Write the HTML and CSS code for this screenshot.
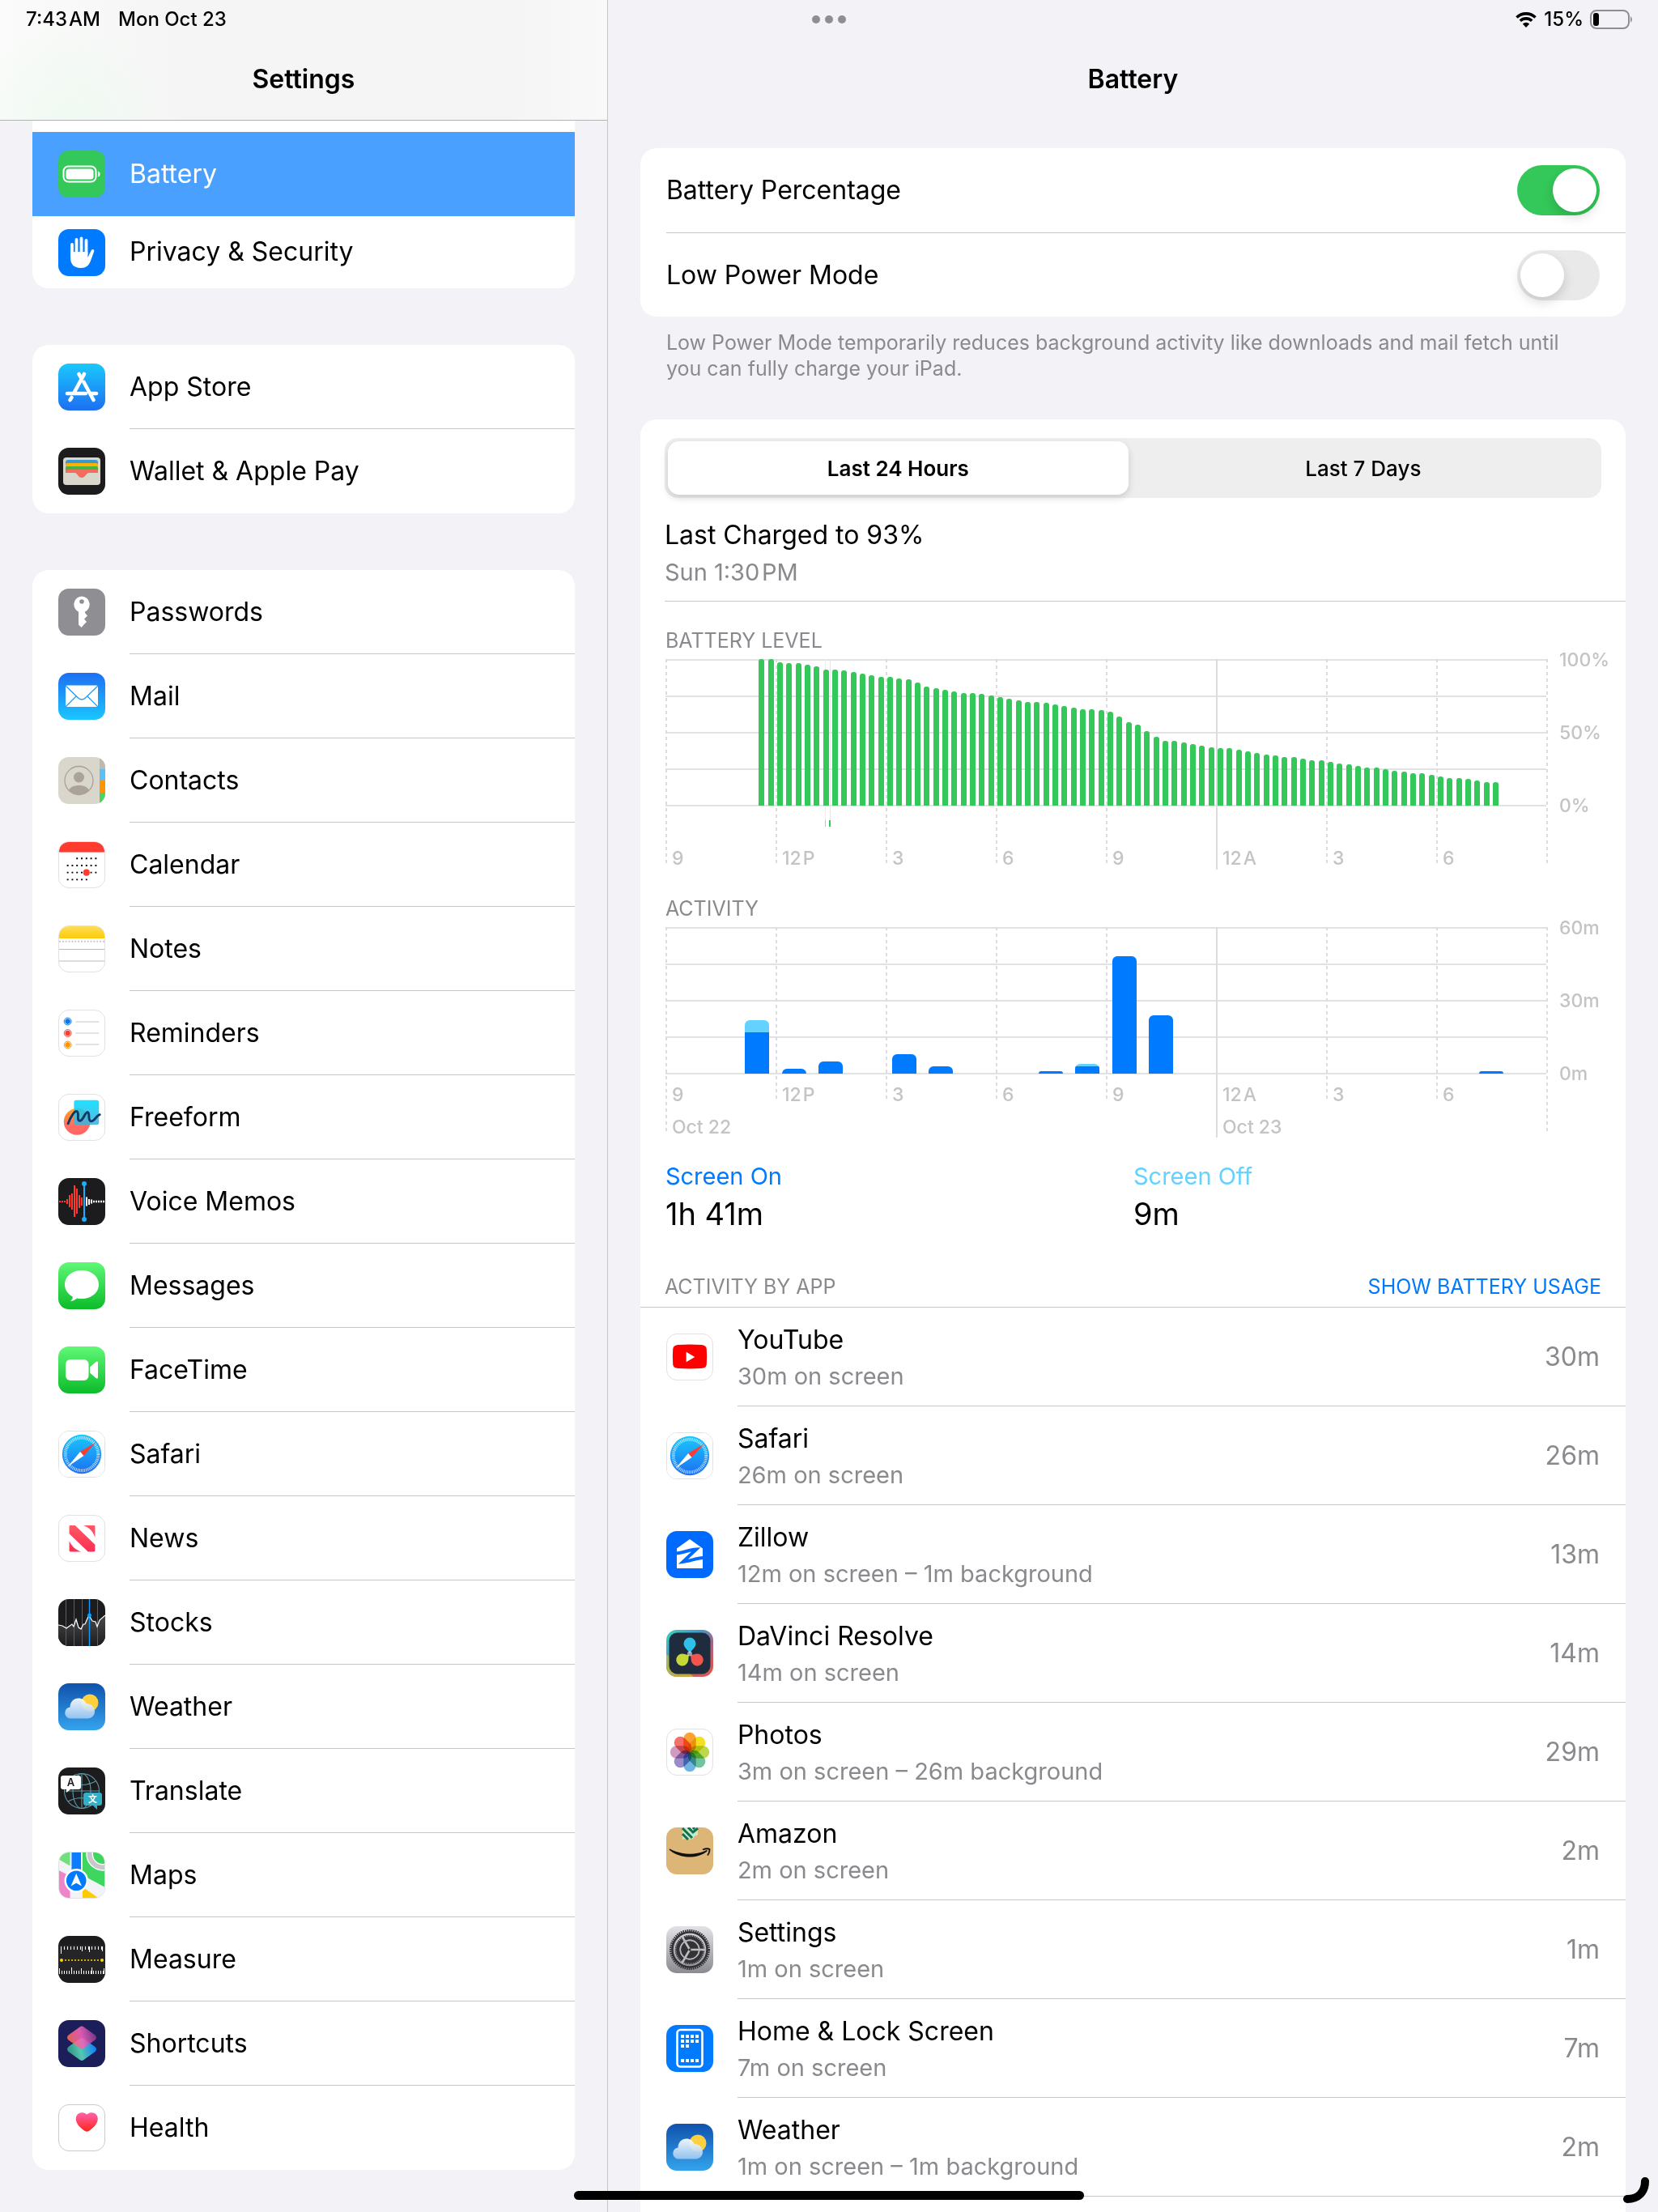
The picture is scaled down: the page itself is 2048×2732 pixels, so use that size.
FILE: index.html
```html
<!DOCTYPE html>
<html lang="en">
<head>
    <meta charset="UTF-8">
    <meta name="viewport" content="width=device-width, initial-scale=1.0">
    <title>Settings - Battery</title>
    <link rel="stylesheet" href="styles.css">
</head>
<body>
    <svg class="defs" width="0" height="0" aria-hidden="true">
        <defs>
            <linearGradient id="g-blue" x2="0" y2="1"><stop stop-color="#1ac8fc"/><stop offset="1" stop-color="#1d6ff2"/></linearGradient>
            <linearGradient id="g-mail" x2="0" y2="1"><stop stop-color="#1e6ff2"/><stop offset="1" stop-color="#1ac6ff"/></linearGradient>
            <linearGradient id="g-green" x2="0" y2="1"><stop stop-color="#60f877"/><stop offset="1" stop-color="#0bbc29"/></linearGradient>
            <linearGradient id="g-yellow" x2="0" y2="1"><stop stop-color="#fedd59"/><stop offset="1" stop-color="#fccb05"/></linearGradient>
            <linearGradient id="g-cyan" x2="0" y2="1"><stop stop-color="#00ddff"/><stop offset="1" stop-color="#43aede"/></linearGradient>
            <linearGradient id="g-coral" x2="0" y2="1"><stop stop-color="#ffa51f"/><stop offset=".6" stop-color="#ff6f61"/><stop offset="1" stop-color="#ff6464"/></linearGradient>
            <linearGradient id="g-news" x2="0" y2="1"><stop stop-color="#ff5964"/><stop offset="1" stop-color="#fb2f55"/></linearGradient>
            <linearGradient id="g-sky" x2="0" y2="1"><stop stop-color="#1052ad"/><stop offset="1" stop-color="#34a3ec"/></linearGradient>
            <linearGradient id="g-cloud" x2="0" y2="1"><stop stop-color="#fff"/><stop offset="1" stop-color="#9cc7f0"/></linearGradient>
            <linearGradient id="g-heart" x2="0" y2="1"><stop stop-color="#ff61ad"/><stop offset="1" stop-color="#ff2616"/></linearGradient>
            <linearGradient id="g-short1" x1="0" y1=".6" x2="1" y2=".4"><stop stop-color="#ff6a4d"/><stop offset=".5" stop-color="#f462bd"/><stop offset="1" stop-color="#7d3a8f"/></linearGradient>
            <linearGradient id="g-short2" x1="0" y1=".6" x2="1" y2=".4"><stop stop-color="#2f8f80"/><stop offset=".45" stop-color="#55c7b0"/><stop offset="1" stop-color="#0a7cff"/></linearGradient>
            <linearGradient id="g-gray" x2="0" y2="1"><stop stop-color="#e2e2e7"/><stop offset="1" stop-color="#8b8b92"/></linearGradient>
            <linearGradient id="g-resolve" x2="1" y2="1"><stop stop-color="#3fd3b4"/><stop offset=".35" stop-color="#3b9fd0"/><stop offset=".6" stop-color="#a0668c"/><stop offset="1" stop-color="#ee5340"/></linearGradient>
            <linearGradient id="g-stocks" x2="0" y2="1"><stop stop-color="#4a4a4c"/><stop offset="1" stop-color="#1c1c1e"/></linearGradient>
        </defs>
        <symbol id="icon-safari" viewBox="0 0 58 58">
            <rect width="58" height="58" fill="#fff"/>
            <circle cx="29" cy="29" r="25" fill="url(#g-blue)"/>
            <circle cx="29" cy="29" r="21" fill="none" stroke="#fff" stroke-opacity=".75" stroke-width="4" stroke-dasharray="1 1.2"/>
            <path d="M47 14 27 26l4.500 5z" fill="#ff3b30"/>
            <path d="M11 45 27 26l4.500 5z" fill="#fff"/>
        </symbol>
        <symbol id="icon-weather" viewBox="0 0 58 58">
            <rect width="58" height="58" fill="url(#g-sky)"/>
            <circle cx="39" cy="24" r="10.500" fill="#ffd03c"/>
            <path d="M16 43.500a7 7 0 0 1-1.500-14C14.500 23 19 18.500 25 18.500c4.500 0 8 2.500 9.500 6.500 6 0 10.500 4 10.500 9.500s-4 9-8.500 9z" fill="url(#g-cloud)" fill-opacity=".92"/>
        </symbol>
    </svg>

    <div class="screen">
        <nav class="sidebar" aria-label="Settings">
            <header class="sidebar-header">
                <div class="status"><span>7:43&#8202;AM</span><span>Mon Oct 23</span></div>
                <h1>Settings</h1>
            </header>

            <ul class="group group-cut">
                <li><a class="item selected" href="#battery">
                    <svg class="icon" viewBox="0 0 58 58"><rect width="58" height="58" fill="#34c759"/><rect x="6.500" y="19.500" width="40" height="19" rx="6" fill="none" stroke="#fff" stroke-width="2"/><rect x="9.500" y="22.500" width="34" height="13" rx="3.500" fill="#fff"/><path d="M49 25.500v7c3.500-1 3.500-6 0-7z" fill="#fff"/></svg>
                    <span>Battery</span></a></li>
                <li><a class="item item-short" href="#privacy">
                    <svg class="icon" viewBox="0 0 58 58"><rect width="58" height="58" fill="#007aff"/><path d="M17 33V19M22.500 31V13M28.500 31V11.500M34.500 31V14" stroke="#fff" stroke-width="3.800" stroke-linecap="round"/><path d="M15.100 28h21.300v7l4-8c1-3 4.500-2.500 3.800.5L40 39c-2 6-6 9-12 9-9 0-12.900-5-12.900-12z" fill="#fff"/></svg>
                    <span>Privacy &amp; Security</span></a></li>
            </ul>

            <ul class="group">
                <li><a class="item" href="#app-store">
                    <svg class="icon" viewBox="0 0 58 58"><rect width="58" height="58" fill="url(#g-blue)"/><path d="M32 13 19.500 36M25.500 13 29 19M31.500 23 43.500 45M11 37h23M41 37h6M16.500 42l-2 3" stroke="#fff" stroke-width="4.600" stroke-linecap="round" fill="none"/></svg>
                    <span>App Store</span></a></li>
                <li><a class="item" href="#wallet">
                    <svg class="icon" viewBox="0 0 58 58"><rect width="58" height="58" fill="#1c1c1e"/><rect x="6" y="12" width="46" height="34" rx="4" fill="#d9d6cc"/><path d="M9 18a3 3 0 0 1 3-3h34a3 3 0 0 1 3 3v5H9z" fill="#3b99d0"/><path d="M9 21a2 2 0 0 1 2-2h36a2 2 0 0 1 2 2v4H9z" fill="#ffb003"/><path d="M9 25a2 2 0 0 1 2-2h36a2 2 0 0 1 2 2v4H9z" fill="#46b43f"/><path d="M9 29a2 2 0 0 1 2-2h36a2 2 0 0 1 2 2v2H38c-4 0-4 6-9 6s-5-6-9-6H9z" fill="#f26d5f"/></svg>
                    <span>Wallet &amp; Apple Pay</span></a></li>
            </ul>

            <ul class="group">
                <li><a class="item" href="#passwords">
                    <svg class="icon" viewBox="0 0 58 58"><rect width="58" height="58" fill="#8e8e93"/><path d="M29 9.500a10 10 0 0 1 4 19v1.500l3 3.500-4 4 3 3.500-3 3-3.500 4-3.500-3.500v-16a10 10 0 0 1 4-19z" fill="#fff"/><circle cx="29" cy="16" r="2.800" fill="#8e8e93"/></svg>
                    <span>Passwords</span></a></li>
                <li><a class="item" href="#mail">
                    <svg class="icon" viewBox="0 0 58 58"><rect width="58" height="58" fill="url(#g-mail)"/><rect x="9" y="15.500" width="40" height="26.500" rx="1.500" fill="#fff"/><path d="M9 16 24 30.500q5 5 10 0L49 16M9 42l13-13M49 42 36 29" fill="none" stroke="#249bf7" stroke-width="1.300"/></svg>
                    <span>Mail</span></a></li>
                <li><a class="item" href="#contacts">
                    <svg class="icon" viewBox="0 0 58 58"><rect width="58" height="58" fill="#d9d6cc"/><path d="M51 0h7v15h-7z" fill="#bdb9b0"/><path d="M51 15h7v14h-7z" fill="#5ac0f6"/><path d="M51 29h7v15h-7z" fill="#ff9500"/><path d="M51 44h7v14h-7z" fill="#4cd163"/><circle cx="25.500" cy="29" r="17.500" fill="none" stroke="#a9a296" stroke-width="1.300"/><circle cx="25.500" cy="25" r="6.500" fill="#aaa29b"/><path d="M13 41c3-8 22-8 25 0-6 7-19 7-25 0z" fill="#aaa29b"/></svg>
                    <span>Contacts</span></a></li>
                <li><a class="item" href="#calendar">
                    <svg class="icon icon-light" viewBox="0 0 58 58"><rect width="58" height="13" fill="#ff3b30"/><path d="M22 21h26M10 30h38M10 39h38M10 48h26" stroke="#000" stroke-width="2" stroke-dasharray="2 4"/><circle cx="35" cy="39" r="4.200" fill="#ff3b30"/></svg>
                    <span>Calendar</span></a></li>
                <li><a class="item" href="#notes">
                    <svg class="icon icon-light" viewBox="0 0 58 58"><rect width="58" height="15.500" fill="url(#g-yellow)"/><path d="M0 19.500h58" stroke="#c9c9cc" stroke-width="2" stroke-dasharray="2 2"/><path d="M0 29.500h58M0 44.500h58" stroke="#bcbcc0" stroke-width="1.200"/></svg>
                    <span>Notes</span></a></li>
                <li><a class="item" href="#reminders">
                    <svg class="icon icon-light" viewBox="0 0 58 58"><g stroke="#fff" stroke-width="1"><circle cx="11" cy="14" r="4" fill="#007aff"/><circle cx="11" cy="29" r="4" fill="#ff3b30"/><circle cx="11" cy="44" r="4" fill="#ff9500"/></g><g fill="none"><circle cx="11" cy="14" r="4.600" stroke="#007aff"/><circle cx="11" cy="29" r="4.600" stroke="#ff3b30"/><circle cx="11" cy="44" r="4.600" stroke="#ff9500"/></g><path d="M21 14.500h30M21 29h30M21 43.500h30" stroke="#c7c7cc" stroke-width="1.200"/></svg>
                    <span>Reminders</span></a></li>
                <li><a class="item" href="#freeform">
                    <svg class="icon icon-light" viewBox="0 0 58 58"><circle cx="23" cy="34.500" r="17" fill="url(#g-coral)"/><rect x="19" y="7" width="32" height="31.500" rx="3" fill="url(#g-cyan)" fill-opacity=".88"/><path d="M11.500 37C15 28 20 20 23 21.500s-1 12 3.500 12S33 22 36.500 22.500 36 34 41 34s6-7 11-8.500" fill="none" stroke="#0d3a63" stroke-width="3" stroke-linecap="round"/></svg>
                    <span>Freeform</span></a></li>
                <li><a class="item" href="#voice-memos">
                    <svg class="icon" viewBox="0 0 58 58"><rect width="58" height="58" fill="#1c1c1e"/><path d="M1 29h9" stroke="#ff3b30" stroke-width="2" stroke-dasharray="2 1"/><path d="M11 26v6M14 21v15M17 19v20M20 9v39M23 13v31M26 21v16M29 24v10" stroke="#ff3b30" stroke-width="2"/><path d="M35 23.500v11M38 26v7M41 26.500v5" stroke="#fff" stroke-width="2"/><path d="M43 29h14" stroke="#fff" stroke-width="2.500" stroke-dasharray="2 1"/><path d="M32 7v44" stroke="#1badf8" stroke-width="2"/><circle cx="32" cy="7" r="3" fill="#1badf8"/><circle cx="32" cy="51" r="3" fill="#1badf8"/></svg>
                    <span>Voice Memos</span></a></li>
                <li><a class="item" href="#messages">
                    <svg class="icon" viewBox="0 0 58 58"><rect width="58" height="58" fill="url(#g-green)"/><path d="M29 10c12 0 21 7.500 21 17.500S41 45 29 45c-2 0-4 0-6-.6-2 2-5 3.400-8 3.400 2-1.500 3-3.500 2.800-5.300C12 39.500 8 34 8 27.500 8 17.500 17 10 29 10z" fill="#fff"/></svg>
                    <span>Messages</span></a></li>
                <li><a class="item" href="#facetime">
                    <svg class="icon" viewBox="0 0 58 58"><rect width="58" height="58" fill="url(#g-green)"/><rect x="9" y="16" width="28.500" height="26" rx="6" fill="#fff"/><path d="m39 25.500 7.500-6.500q2.500-1.500 2.500 1v18q0 2.500-2.500 1L39 32.500z" fill="#fff"/></svg>
                    <span>FaceTime</span></a></li>
                <li><a class="item" href="#safari">
                    <svg class="icon icon-light"><use href="#icon-safari"/></svg>
                    <span>Safari</span></a></li>
                <li><a class="item" href="#news">
                    <svg class="icon icon-light" viewBox="0 0 58 58"><path d="M14.500 12.500h6L46 37v7.500q0 1.500-1.500 1.500H37L13 23v-9q0-1.500 1.500-1.500zM31 12.500h13.500q1.500 0 1.500 1.500v14C43 19 38 15 31 12.500zM13 32c3 7 8 11.500 15 14H14.500Q13 46 13 44.500z" fill="url(#g-news)"/></svg>
                    <span>News</span></a></li>
                <li><a class="item" href="#stocks">
                    <svg class="icon" viewBox="0 0 58 58"><rect width="58" height="58" fill="#1c1c1e"/><path d="M0 32 5 33 10 36 17 31 19 34 22 25 25 35 28 37 31 31 33 31 36 24 38 20 42 27 46 28 48 34 51 26 58 20V58H0z" fill="url(#g-stocks)"/><path d="M9.500 0v58M19.500 0v58M29.500 0v58M48.500 0v58" stroke="#5e5e61"/><path d="M38.500 0v58" stroke="#0a9cff" stroke-width="1.400"/><path d="M0 32 5 33 10 36 17 31 19 34 22 25 25 35 28 37 31 31 33 31 36 24 38 20 42 27 46 28 48 34 51 26 58 20" fill="none" stroke="#fff" stroke-width="1.200"/><circle cx="38.500" cy="20" r="2.500" fill="#0a9cff"/></svg>
                    <span>Stocks</span></a></li>
                <li><a class="item" href="#weather">
                    <svg class="icon"><use href="#icon-weather"/></svg>
                    <span>Weather</span></a></li>
                <li><a class="item" href="#translate">
                    <svg class="icon" viewBox="0 0 58 58"><rect width="58" height="58" fill="#1c1c1e"/><g fill="none" stroke="#5f9aa5" stroke-width="1.100"><circle cx="29" cy="29" r="21.500"/><ellipse cx="29" cy="29" rx="11" ry="21.500"/><path d="M29 7v44M7 29h43M12 17q17 9 34 0M12 42q17-9 34 0"/></g><path d="M6 10h19q3 0 3 3v11q0 3-3 3H15l-5 4v-4H6q-3 0-3-3V13q0-3 3-3z" fill="#fff"/><path d="M34 31h17q3 0 3 3v10q0 3-3 3h-3v5l-5-5h-9q-3 0-3-3V34q0-3 3-3z" fill="#30b0c7"/><text class="glyph" x="15.500" y="23" fill="#1c1c1e">A</text><text class="glyph glyph-cjk" x="42.500" y="43" fill="#fff">文</text></svg>
                    <span>Translate</span></a></li>
                <li><a class="item" href="#maps">
                    <svg class="icon icon-light" viewBox="0 0 58 58"><rect width="58" height="58" fill="#f2f2f7"/><path d="M0 0h14v17L0 9z" fill="#6fe07d"/><path d="M30 0h28v44L30 29z" fill="#3dd65f"/><path d="M0 23l14 7v28H0z" fill="#f084c8"/><path d="M30 44 50 58H30z" fill="#ffcc00"/><circle cx="56" cy="2" r="17" fill="none" stroke="#fff" stroke-width="9"/><circle cx="56" cy="2" r="17" fill="none" stroke="#c7c7cc" stroke-width="6"/><path d="M16 0h12v36H16z" fill="#0a7cff"/><circle cx="22" cy="36" r="14" fill="#007aff" stroke="#fff" stroke-width="2.500"/><path d="m22 27 7 16-7-4-7 4z" fill="#fff"/></svg>
                    <span>Maps</span></a></li>
                <li><a class="item" href="#measure">
                    <svg class="icon" viewBox="0 0 58 58"><rect width="58" height="58" fill="#1c1c1e"/><path d="M0 11h58v37H0z" fill="#252527"/><path d="M3.500 13v9" stroke="#fff"/><path d="M7 15h22M29 15h26" stroke="#fff" stroke-width="4" stroke-dasharray="1 3"/><path d="M29.500 13v6M38.500 13v7M54.500 13v6M1.500 40v7M16.500 39v8M28.500 40v7M41.500 39v8M56.500 40v7" stroke="#fff"/><path d="M4 45h53" stroke="#fff" stroke-width="4" stroke-dasharray="1 2"/><path d="M8 30h44" stroke="#ffd60a" stroke-width="1.600" stroke-dasharray="2 2"/><circle cx="4" cy="30" r="2" fill="#ffd60a"/><circle cx="54" cy="30" r="2" fill="#ffd60a"/></svg>
                    <span>Measure</span></a></li>
                <li><a class="item" href="#shortcuts">
                    <svg class="icon" viewBox="0 0 58 58"><rect width="58" height="58" fill="#1c1e5a"/><path d="m26.500 23-14 10q-3 3 0 6l14 10q2.500 2 5 0l14-10q3-3 0-6l-14-10q-2.500-2-5 0z" fill="url(#g-short2)"/><path d="m26.500 8.500-14 10q-3 3 0 6l14 10q2.500 2 5 0l14-10q3-3 0-6l-14-10q-2.500-2-5 0z" fill="url(#g-short1)" fill-opacity=".88"/></svg>
                    <span>Shortcuts</span></a></li>
                <li><a class="item" href="#health">
                    <svg class="icon icon-light icon-line" viewBox="0 0 58 58"><path d="M35.500 12c2-2 4-2.500 6.500-2.500 4 0 7.500 3 7.500 8 0 7-7 12.500-12 16q-2 1-4 0c-5-3.500-12-9-12-16 0-5 3.500-8 7.500-8 2.500 0 4.500.5 6.500 2.500z" fill="url(#g-heart)"/></svg>
                    <span>Health</span></a></li>
            </ul>
        </nav>

        <main class="detail" id="battery">
            <header class="detail-header">
                <div class="status status-right">
                    <button class="multitask" type="button" aria-label="Multitasking"><i></i><i></i><i></i></button>
                    <div class="indicators">
                        <svg width="28" height="22" viewBox="0 0 28 22" aria-hidden="true"><path d="M2.500 8.500a16.500 16.500 0 0 1 23 0M6.800 12.800a10.400 10.400 0 0 1 14.400 0" fill="none" stroke="#000" stroke-width="3.600"/><path d="M9.800 16.500q4.200-3.400 8.400 0L14 21z"/></svg>
                        <span>15%</span>
                        <svg width="54" height="24" viewBox="0 0 54 24" aria-hidden="true"><rect x="1" y="1" width="47" height="22" rx="7" fill="none" stroke="#8f8f93" stroke-width="2"/><rect x="4" y="4" width="7" height="16" rx="3"/><path d="M50 8v8q4-4 0-8z" fill="#8f8f93"/></svg>
                    </div>
                </div>
                <h2>Battery</h2>
            </header>

            <div class="content">
                <section class="card">
                    <div class="setting">
                        <label for="percentage">Battery Percentage</label>
                        <input class="switch" type="checkbox" id="percentage" checked>
                    </div>
                    <div class="setting">
                        <label for="low-power">Low Power Mode</label>
                        <input class="switch" type="checkbox" id="low-power">
                    </div>
                </section>
                <p class="note">Low Power Mode temporarily reduces background activity like downloads and mail fetch until you can fully charge your iPad.</p>

                <section class="card card-open">
                    <div class="summary">
                        <div class="segments">
                            <button class="segment active" type="button">Last 24 Hours</button>
                            <button class="segment" type="button">Last 7 Days</button>
                        </div>
                        <div class="charged">
                            <p>Last Charged to 93%</p>
                            <p class="when">Sun 1:30&#8202;PM</p>
                        </div>
                    </div>

                    <div class="charts">
                        <h3>BATTERY LEVEL</h3>
                        <div class="chart">
                            <div class="plot">
                                <div class="lines"></div>
                                <div class="hours">
                                    <span>9</span><span>12&#8202;P</span><span>3</span><span>6</span><span>9</span><span class="midnight">12&#8202;A</span><span>3</span><span>6</span><span class="end"></span>
                                </div>
                                <div class="charging"><i></i></div>
                                <div class="bars bars-level" id="level-bars"></div>
                            </div>
                            <div class="axis"><span>100%</span><span>50%</span><span>0%</span></div>
                        </div>

                        <h3>ACTIVITY</h3>
                        <div class="chart">
                            <div class="plot">
                                <div class="lines"></div>
                                <div class="hours hours-days">
                                    <span class="day">9<b>Oct 22</b></span><span>12&#8202;P</span><span>3</span><span>6</span><span>9</span><span class="midnight">12&#8202;A<b>Oct 23</b></span><span>3</span><span>6</span><span class="end day"></span>
                                </div>
                                <div class="bars bars-activity" id="activity-bars"></div>
                            </div>
                            <div class="axis"><span>60m</span><span>30m</span><span>0m</span></div>
                        </div>

                        <dl class="totals">
                            <div><dt class="on">Screen On</dt><dd>1h 41m</dd></div>
                            <div><dt class="off">Screen Off</dt><dd>9m</dd></div>
                        </dl>
                    </div>

                    <div class="apps-header">
                        <h3>ACTIVITY BY APP</h3>
                        <button type="button">SHOW BATTERY USAGE</button>
                    </div>
                    <ul class="apps">
                        <li>
                            <svg class="icon icon-light" viewBox="0 0 58 58"><path d="M14 13.500q15-1 30 0 6 .5 6.500 5 .8 10 0 20-.5 4.500-6.500 5-15 1-30 0-6-.5-6.500-5-.8-10 0-20 .5-4.500 6.500-5z" fill="#f00"/><path d="M24.500 22.500 35.500 29l-11 6.500z" fill="#fff"/></svg>
                            <div class="app"><p>YouTube<small>30m on screen</small></p><span>30m</span></div>
                        </li>
                        <li>
                            <svg class="icon icon-light"><use href="#icon-safari"/></svg>
                            <div class="app"><p>Safari<small>26m on screen</small></p><span>26m</span></div>
                        </li>
                        <li>
                            <svg class="icon" viewBox="0 0 58 58"><rect width="58" height="58" fill="#006aff"/><path d="M13 21.500 29 10l16 11.500V46H13z" fill="#fff"/><path d="M12 27.500c9-.5 16-4.500 25-5L20.500 38c9-1 16-4.500 25.500-5" fill="none" stroke="#006aff" stroke-width="4"/></svg>
                            <div class="app"><p>Zillow<small>12m on screen – 1m background</small></p><span>13m</span></div>
                        </li>
                        <li>
                            <svg class="icon" viewBox="0 0 58 58"><rect width="58" height="58" fill="url(#g-resolve)"/><path d="M0 30v28h34z" fill="#c9c02f" fill-opacity=".75"/><rect x="3.500" y="3.500" width="51" height="51" rx="10" fill="#1f2c3e"/><path d="M29 29.500c-1-4-7.500-7-7.500-12.500a7.500 7.500 0 0 1 15 0c0 5.500-6.500 8.500-7.500 12.500z" fill="#2fc0ea"/><path d="M28 31c-1 4 .5 9-4.500 12.500a7.500 7.500 0 1 1-7.500-13c5-2.500 8.500 1 12 .5z" fill="#c4d838"/><path d="M30 31c1 4-.5 9 4.500 12.500a7.500 7.500 0 1 0 7.500-13c-5-2.500-8.500 1-12 .5z" fill="#f2554d"/><circle cx="29" cy="29.500" r="3" fill="#fff" fill-opacity=".55"/></svg>
                            <div class="app"><p>DaVinci Resolve<small>14m on screen</small></p><span>14m</span></div>
                        </li>
                        <li>
                            <svg class="icon icon-light" viewBox="0 0 58 58"><g class="petals"><rect x="21" y="4" width="16" height="25" rx="8" fill="#faa334"/><rect x="21" y="4" width="16" height="25" rx="8" fill="#f3e11f" transform="rotate(45 29 29)"/><rect x="21" y="4" width="16" height="25" rx="8" fill="#bcd94a" transform="rotate(90 29 29)"/><rect x="21" y="4" width="16" height="25" rx="8" fill="#72c59a" transform="rotate(135 29 29)"/><rect x="21" y="4" width="16" height="25" rx="8" fill="#70b4e4" transform="rotate(180 29 29)"/><rect x="21" y="4" width="16" height="25" rx="8" fill="#9a8cc8" transform="rotate(225 29 29)"/><rect x="21" y="4" width="16" height="25" rx="8" fill="#cf9bc4" transform="rotate(270 29 29)"/><rect x="21" y="4" width="16" height="25" rx="8" fill="#f3706b" transform="rotate(315 29 29)"/></g></svg>
                            <div class="app"><p>Photos<small>3m on screen – 26m background</small></p><span>29m</span></div>
                        </li>
                        <li>
                            <svg class="icon" viewBox="0 0 58 58"><rect width="58" height="58" fill="#dcb577"/><path d="M20 0h19v9l-4 2-2 3-5 1-4-1-4 1z" fill="#c3eacb"/><path d="M20 1l12 12M20 8l7 7M27 0l6 6 6-5M33 0l2 2" stroke="#12704f" stroke-width="3" fill="none"/><path d="M4.500 26.500C18 34 36 35 50 28q1.500.5 0 2C36 40 16 38 4 28q-.8-1.500.5-1.500z" fill="#111"/><path d="M45 27.500c4-1.500 7-1.500 8.500-.5 0 2-.5 5-2.500 7.500" fill="none" stroke="#111" stroke-width="1.800"/></svg>
                            <div class="app"><p>Amazon<small>2m on screen</small></p><span>2m</span></div>
                        </li>
                        <li>
                            <svg class="icon" viewBox="0 0 58 58"><rect width="58" height="58" fill="url(#g-gray)"/><circle cx="29" cy="29" r="23.500" fill="none" stroke="#333336" stroke-width="3" stroke-dasharray="1.600 1"/><circle cx="29" cy="29" r="21.500" fill="none" stroke="#333336" stroke-width="2.500"/><circle cx="29" cy="29" r="17" fill="none" stroke="#333336" stroke-width="2.500" stroke-dasharray="1.400 .8"/><circle cx="29" cy="29" r="14.500" fill="none" stroke="#333336" stroke-width="4"/><circle cx="29" cy="29" r="11" fill="#333336"/><path d="M29 29h19M29 29l-9.500-16.500M29 29l-9.500 16.500" stroke="#bdbdc2" stroke-width="2.600"/><circle cx="29" cy="29" r="11.600" fill="none" stroke="#b4b4b9" stroke-width="1.600"/><circle cx="29" cy="29" r="1.500" fill="#333336"/></svg>
                            <div class="app"><p>Settings<small>1m on screen</small></p><span>1m</span></div>
                        </li>
                        <li>
                            <svg class="icon" viewBox="0 0 58 58"><rect width="58" height="58" fill="#007aff"/><rect x="13.500" y="6" width="31" height="45.500" rx="4" fill="none" stroke="#fff" stroke-width="2.600"/><path d="M18 14h23M18 20h23M18 26h11M18 44h23" stroke="#fff" stroke-width="4" stroke-dasharray="4 2"/></svg>
                            <div class="app"><p>Home &amp; Lock Screen<small>7m on screen</small></p><span>7m</span></div>
                        </li>
                        <li>
                            <svg class="icon"><use href="#icon-weather"/></svg>
                            <div class="app"><p>Weather<small>1m on screen – 1m background</small></p><span>2m</span></div>
                        </li>
                    </ul>
                </section>
            </div>
        </main>

        <div class="home-bar"></div>
        <svg class="corner" viewBox="0 0 32 32" aria-hidden="true"><path d="M5 27C18 27 27 19 27 5" fill="none" stroke="#000" stroke-width="10" stroke-linecap="round"/></svg>
    </div>

    <script src="script.js"></script>
</body>
</html>
```
FILE: styles.css
```css
* {
    box-sizing: border-box;
}
body {
    margin: 0;
    font-family: Inter, "Liberation Sans", sans-serif;
    font-size: 32px;
    line-height: 40px;
    color: #000;
    background-color: #f2f2f7;
}
h1, h2, h3, p, ul, dl, dd {
    margin: 0;
    padding: 0;
}
ul {
    list-style: none;
}
button {
    font-family: inherit;
    border: none;
    background: none;
    padding: 0;
    cursor: pointer;
}
.defs {
    position: absolute;
}
.screen {
    position: relative;
    display: grid;
    grid-template-columns: 11fr 19fr;
    height: 100vh;
    overflow: hidden;
}

/* Status bar and titles */
.status {
    display: flex;
    gap: 22px;
    height: 48px;
    padding-left: 32px;
    align-items: center;
    font-size: 24px;
    line-height: 28px;
    font-weight: 500;
}
h1, h2 {
    font-size: 32px;
    line-height: 100px;
    font-weight: 600;
    text-align: center;
}
.sidebar-header {
    height: 149px;
    border-bottom: 1px solid #b2b2b6;
    background: radial-gradient(circle at 90px 150px, #effaf1, transparent 120px), linear-gradient(to right, #fafbfa, #f5f5f5 30%, #f5f5f5 85%, #f9f9f9);
}
.status-right {
    justify-content: space-between;
    padding-right: 30px;
}
.multitask {
    display: flex;
    gap: 6px;
    margin-left: 220px;
}
.multitask i {
    width: 10px;
    height: 10px;
    border-radius: 50%;
    background-color: #8e8e93;
}
.indicators {
    display: flex;
    align-items: center;
    gap: 8px;
}

/* Sidebar */
.sidebar {
    border-right: 1px solid #c6c6c8;
}
.group {
    margin: 0 40px 70px;
    background-color: #fff;
    border-radius: 20px;
}
.group-cut {
    padding-top: 14px;
    border-radius: 0 0 20px 20px;
}
.item {
    display: flex;
    height: 104px;
    padding-left: 32px;
    align-items: center;
    gap: 30px;
    color: #000;
    text-decoration: none;
}
.item span {
    flex: 1;
    line-height: 103px;
    border-bottom: 1px solid #c6c6c8;
}
.item.selected {
    background-color: #4aa0ff;
    color: #fff;
}
.item.item-short {
    height: 89px;
}
.item.item-short span {
    line-height: 88px;
}
.item.selected span, li:last-child .item span {
    border-bottom-color: transparent;
}
.icon {
    display: block;
    flex: none;
    width: 58px;
    height: 58px;
    border-radius: 13px;
    overflow: hidden;
}
.icon-light {
    border: 1px solid #e2e2e5;
    background-color: #fff;
}
.icon-line {
    border-color: #cbcbce;
}
.glyph {
    font-size: 13px;
    font-weight: 600;
    text-anchor: middle;
}
.glyph-cjk {
    font-family: "Noto Sans CJK SC", sans-serif;
    font-size: 11px;
}
.petals rect {
    mix-blend-mode: multiply;
}

/* Battery page */
.content {
    padding: 35px 40px 0;
}
.card {
    background-color: #fff;
    border-radius: 20px;
}
.card-open {
    min-height: 100vh;
}
.setting {
    display: flex;
    height: 104px;
    margin-left: 32px;
    padding-right: 32px;
    align-items: center;
    justify-content: space-between;
}
.setting + .setting {
    border-top: 1px solid #c6c6c8;
}
.switch {
    appearance: none;
    width: 102px;
    height: 62px;
    margin: 0;
    padding: 4px;
    border-radius: 31px;
    background-color: #e9e9ea;
}
.switch::before {
    content: "";
    display: block;
    width: 54px;
    height: 54px;
    border-radius: 50%;
    background-color: #fff;
    box-shadow: 0 6px 14px rgba(0, 0, 0, 0.15);
}
.switch:checked {
    background-color: #34c759;
}
.switch:checked::before {
    margin-left: auto;
}
.note {
    padding: 16px 60px 47px 32px;
    font-size: 25px;
    line-height: 32px;
    color: #8a8a8e;
}
.summary {
    margin-left: 30px;
    padding: 23px 0 19px;
    border-bottom: 1px solid #c6c6c8;
}
.segments {
    display: grid;
    grid-template-columns: 49fr 50fr;
    height: 74px;
    margin-right: 30px;
    padding: 4px;
    border-radius: 16px;
    background-color: #eee;
}
.segment {
    font-size: 26px;
    font-weight: 500;
    border-radius: 14px;
    color: #000;
}
.segment.active {
    background-color: #fff;
    font-weight: 600;
    box-shadow: 0 4px 10px rgba(0, 0, 0, 0.15);
}
.charged {
    padding-top: 26px;
}
.when {
    padding-top: 10px;
    font-size: 29px;
    line-height: 32px;
    color: #8a8a8e;
}

/* Charts */
.charts {
    padding-left: 31px;
}
h3 {
    font-size: 25px;
    line-height: 32px;
    font-weight: 400;
    color: #8a8a8e;
}
.charts h3 {
    padding: 32px 0 7px;
}
.chart {
    display: grid;
    grid-template-columns: 1fr 98px;
    font-size: 23px;
    line-height: 28px;
    font-weight: 500;
    color: #c4c4c6;
}
.plot {
    display: grid;
    height: 260px;
}
.plot > div {
    grid-area: 1 / 1;
}
.lines {
    height: 182px;
    background: repeating-linear-gradient(#e2e2e3 0 2px, transparent 2px 45px);
}
.hours {
    display: grid;
    grid-template-columns: repeat(8, 1fr) 0;
}
.hours span {
    padding: 232px 0 0 8px;
    background: repeating-linear-gradient(#dcdcde 0 4px, transparent 4px 8px) no-repeat 0 0 / 2px 256px;
}
.hours .midnight {
    background: linear-gradient(#dcdcde, #dcdcde) no-repeat 0 0 / 2px 260px;
}
.hours .end {
    width: 2px;
    padding-left: 0;
}
.hours-days span {
    padding-top: 193px;
    background-size: 2px 216px;
}
.hours-days .day {
    background-size: 2px 256px;
}
.hours-days b {
    display: block;
    margin-top: 12px;
    font-weight: 500;
    white-space: nowrap;
}
.bars {
    display: grid;
    height: 181px;
    align-items: end;
}
.bars-level {
    grid-template-columns: repeat(96, 1fr);
}
.bars-level i {
    width: 7px;
    justify-self: center;
    border-radius: 3px 3px 0 0;
    background-color: #34c759;
}
.charging {
    display: grid;
    grid-template-columns: repeat(96, 1fr);
}
/* Two thin marks for the time on the charger, solid at the foot */
.charging i {
    grid-column: 18;
    justify-self: end;
    width: 7px;
    height: 207px;
    background:
        linear-gradient(#34c759, #34c759) no-repeat 100% 100% / 2px 8px,
        linear-gradient(#8fdfa5, #8fdfa5) no-repeat 0 100% / 1px 8px,
        linear-gradient(#d3f2db, #d3f2db) no-repeat 100% 0 / 1px 199px,
        linear-gradient(#e3f6e8, #e3f6e8) no-repeat 0 0 / 1px 199px;
}
.bars-activity {
    grid-template-columns: repeat(24, 1fr);
}
.bars-activity div {
    display: flex;
    flex-direction: column;
    width: 30px;
    justify-self: center;
    border-radius: 6px 6px 0 0;
    overflow: hidden;
    background-color: #64d2ff;
}
.bars-activity i {
    margin-top: auto;
    background-color: #007aff;
}
.axis {
    display: flex;
    flex-direction: column;
    justify-content: space-between;
    height: 208px;
    margin-top: -13px;
    padding-left: 16px;
}
.totals {
    display: grid;
    grid-template-columns: 1fr 1fr;
    margin-right: 30px;
    padding: 30px 0 51px;
}
.totals dt {
    font-size: 29px;
    line-height: 36px;
}
.totals dd {
    padding-top: 5px;
    font-size: 38px;
    line-height: 46px;
}
.on {
    color: #007aff;
}
.off {
    color: #64d2ff;
}

/* App list */
.apps-header {
    display: flex;
    justify-content: space-between;
    padding: 0 30px 9px;
    border-bottom: 1px solid #c6c6c8;
}
.apps-header button {
    font-size: 25px;
    line-height: 32px;
    color: #007aff;
}
.apps li {
    display: flex;
    padding-left: 32px;
    align-items: center;
    gap: 30px;
}
.app {
    display: flex;
    flex: 1;
    height: 122px;
    padding-right: 32px;
    align-items: center;
    justify-content: space-between;
    border-bottom: 1px solid #c6c6c8;
}
.app small {
    display: block;
    padding-top: 8px;
    font-size: 29px;
    line-height: 34px;
    color: #8a8a8e;
}
.app span {
    color: #8a8a8e;
}

/* Drawn over the page */
.home-bar {
    position: absolute;
    bottom: 15px;
    left: 50%;
    width: 630px;
    height: 11px;
    margin-left: -315px;
    border-radius: 6px;
    background-color: #000;
}
.corner {
    position: absolute;
    right: 11px;
    bottom: 11px;
    width: 32px;
    height: 32px;
}
```
FILE: script.js
```js
// Battery level in percent, one value for every 15 minutes
var levels = [
    100, 100, 98, 97, 97, 96, 95, 93, 93, 92, 91, 90, 89, 88, 88, 87, 86, 84, 81, 80,
    79, 78, 77, 77, 76, 75, 74, 73, 72, 71, 71, 70, 69, 68, 67, 66, 66, 65, 64, 61,
    57, 55, 51, 47, 44, 44, 43, 42, 41, 40, 39, 39, 38, 37, 36, 35, 34, 33, 33, 32,
    31, 31, 30, 29, 28, 27, 26, 26, 25, 24, 23, 22, 22, 21, 20, 19, 19, 18, 17, 16, 16
];
var firstSlot = 11;

// Minutes of use per hour, counted from 9 AM
var activity = [
    { hour: 3, on: 17, off: 5 },
    { hour: 4, on: 2, off: 0 },
    { hour: 5, on: 5, off: 0 },
    { hour: 7, on: 8, off: 0 },
    { hour: 8, on: 3, off: 0 },
    { hour: 11, on: 1, off: 0 },
    { hour: 12, on: 3, off: 1 },
    { hour: 13, on: 48, off: 0 },
    { hour: 14, on: 24, off: 0 },
    { hour: 23, on: 1, off: 0 }
];

var levelBars = document.getElementById("level-bars");
levels.forEach(function (level, index) {
    var bar = document.createElement("i");
    bar.style.gridColumn = firstSlot + index;
    bar.style.height = level + "%";
    levelBars.appendChild(bar);
});

var activityBars = document.getElementById("activity-bars");
activity.forEach(function (entry) {
    var total = entry.on + entry.off;
    var bar = document.createElement("div");
    var on = document.createElement("i");
    bar.style.gridColumn = entry.hour;
    bar.style.height = total / 60 * 100 + "%";
    on.style.height = entry.on / total * 100 + "%";
    bar.appendChild(on);
    activityBars.appendChild(bar);
});
```
